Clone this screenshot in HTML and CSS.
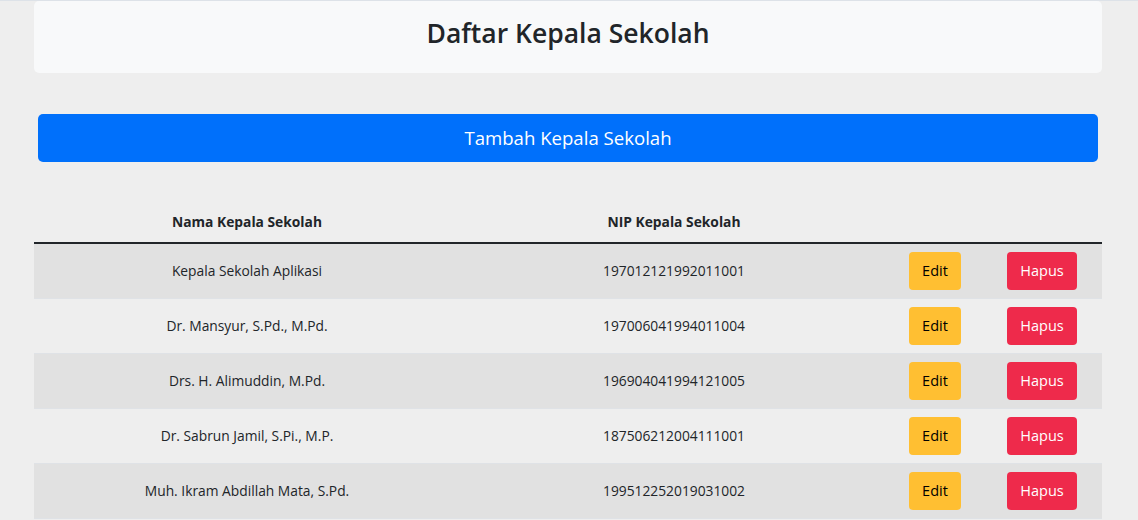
FILE: index.html
```html
<!DOCTYPE html>
<html lang="id">
<head>
<meta charset="utf-8">
<title>Daftar Kepala Sekolah</title>
<link rel="stylesheet" href="styles.css">
</head>
<body>
<div class="topline"></div>
<main class="wrap">
  <header class="card">
    <h3 class="title">Daftar Kepala Sekolah</h3>
  </header>
  <div class="add-row">
    <button class="btn btn-primary">Tambah Kepala Sekolah</button>
  </div>
  <table class="list">
    <colgroup>
      <col class="c-name"><col class="c-nip"><col class="c-edit"><col class="c-del">
    </colgroup>
    <thead>
      <tr><th>Nama Kepala Sekolah</th><th>NIP Kepala Sekolah</th><th></th><th></th></tr>
    </thead>
    <tbody>
      <tr><td>Kepala Sekolah Aplikasi</td><td>197012121992011001</td><td><button class="btn btn-edit">Edit</button></td><td><button class="btn btn-del">Hapus</button></td></tr>
      <tr><td>Dr. Mansyur, S.Pd., M.Pd.</td><td>197006041994011004</td><td><button class="btn btn-edit">Edit</button></td><td><button class="btn btn-del">Hapus</button></td></tr>
      <tr><td>Drs. H. Alimuddin, M.Pd.</td><td>196904041994121005</td><td><button class="btn btn-edit">Edit</button></td><td><button class="btn btn-del">Hapus</button></td></tr>
      <tr><td>Dr. Sabrun Jamil, S.Pi., M.P.</td><td>187506212004111001</td><td><button class="btn btn-edit">Edit</button></td><td><button class="btn btn-del">Hapus</button></td></tr>
      <tr><td>Muh. Ikram Abdillah Mata, S.Pd.</td><td>199512252019031002</td><td><button class="btn btn-edit">Edit</button></td><td><button class="btn btn-del">Hapus</button></td></tr>
    </tbody>
  </table>
</main>
</body>
</html>
```

FILE: styles.css
```css
* { box-sizing: border-box; }
html, body {
  margin: 0;
  padding: 0;
  background: #eeeeee;
  color: #212529;
  font-family: "Open Sans", "Noto Sans", "Liberation Sans", sans-serif;
  font-size: 16px;
  line-height: 1.5;
  overflow: hidden;
}
.topline {
  height: 1px;
  background: #dde2e8;
}
.wrap {
  width: 1068px;
  margin-left: 34px;
}
.card {
  background: #f8f9fa;
  border-radius: 5px;
  padding: 16px 16px 15px;
  text-align: center;
}
.title {
  margin: 0 0 8px;
  font-size: 26.5px;
  font-weight: 600;
  line-height: 33px;
}
.add-row {
  padding: 41px 4px 40px;
}
.btn {
  font-family: inherit;
  border: 1px solid transparent;
  border-radius: 4px;
  cursor: pointer;
}
.btn-primary {
  display: block;
  width: 100%;
  height: 48px;
  background: #0070fb;
  color: #fff;
  font-size: 18.6px;
  line-height: 1.5;
  padding: 0 16px;
  border-radius: 5px;
}
.list {
  width: 100%;
  border-collapse: separate;
  border-spacing: 0;
  table-layout: fixed;
  text-align: center;
  font-size: 13.8px;
}
.c-name { width: 426px; }
.c-nip { width: 428px; }
.c-edit { width: 94px; }
.c-del { width: 120px; }
.list th {
  font-weight: 700;
  padding: 8px;
  height: 42px;
  border-bottom: 2px solid #212529;
}
.list td {
  padding: 8px;
  height: 55px;
  vertical-align: middle;
  border-bottom: 1px solid #dfe2e6;
}
.list tbody tr:nth-child(odd) { background: #e1e1e1; }
.list tbody tr:nth-child(even) { background: #eeeeee; }
.btn-edit, .btn-del {
  height: 38px;
  padding: 0;
  font-size: 14.5px;
  line-height: 36px;
}
.btn-edit {
  background: #ffbf32;
  color: #000;
  width: 52px;
}
.btn-del {
  background: #ee2a4b;
  color: #fff;
  width: 70px;
}
```
